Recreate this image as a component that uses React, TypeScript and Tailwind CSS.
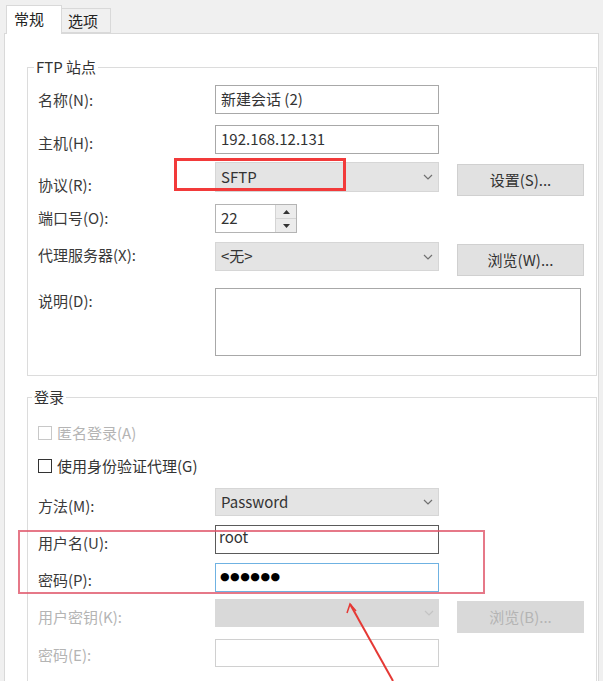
import React from "react";

function Chevron({ light }: { light?: boolean }) {
  return (
    <svg width="10" height="6" viewBox="0 0 10 6" className="shrink-0">
      <polyline
        points="1,1 5,5 9,1"
        fill="none"
        stroke={light ? "#c4c4c4" : "#707070"}
        strokeWidth="1.2"
      />
    </svg>
  );
}

function Tri({ up }: { up?: boolean }) {
  return (
    <svg width="7" height="4" viewBox="0 0 7 4">
      <polygon points={up ? "0,4 7,4 3.5,0" : "0,0 7,0 3.5,4"} fill="#333" />
    </svg>
  );
}

export default function App() {
  return (
    <div className="relative w-[603px] h-[681px] overflow-hidden bg-[#f0f0f0] font-['Noto_Sans_CJK_SC','Noto_Sans',sans-serif] text-[15px] text-[#3a3a3a]">
      {/* Tabs */}
      <div className="flex items-end h-[33px] pl-[6px]">
        <div className="relative z-10 -mb-px flex h-[29px] w-[56px] items-start bg-white border border-b-0 border-[#d9d9d9] pl-[7px] pt-[3px] leading-[20px] text-[#222]">
          常规
        </div>
        <div className="flex h-[25px] w-[49px] items-start bg-[#f0f0f0] border border-l-0 border-[#d9d9d9] pl-[6px] pt-[2px] leading-[20px] text-[#222]">
          选项
        </div>
      </div>

      {/* Panel */}
      <div className="ml-[4px] w-[595px] h-[660px] bg-white border border-[#d9d9d9] pl-[22px] pr-[1px] pt-[33px]">
        {/* FTP group */}
        <div className="relative border border-[#dcdcdc] pl-[10px] pb-[19px]">
          <span className="absolute left-[6px] -top-[11px] bg-white px-[2px] leading-[20px] text-[#333]">
            FTP 站点
          </span>

          {/* 名称 */}
          <div className="mt-[17px] flex items-start">
            <div className="w-[177px] pt-[5px] leading-[20px]">名称(N):</div>
            <div className="flex h-[29px] w-[224px] items-center border border-[#a8a8a8] pl-[5px] text-[#333]">
              新建会话 (2)
            </div>
          </div>

          {/* 主机 */}
          <div className="mt-[11px] flex items-start">
            <div className="w-[177px] pt-[8px] leading-[20px]">主机(H):</div>
            <div className="flex h-[29px] w-[224px] items-center border border-[#a8a8a8] pl-[5px] text-[#333]">
              192.168.12.131
            </div>
          </div>

          {/* 协议 */}
          <div className="mt-[8px] flex items-start">
            <div className="w-[177px] pt-[13px] leading-[20px]">协议(R):</div>
            <div className="flex h-[30px] w-[224px] items-center justify-between bg-[#e4e4e4] border border-[#d6d6d6] pl-[5px] pr-[5px] text-[#333]">
              <span>SFTP</span>
              <Chevron />
            </div>
            <div className="ml-[18px] mt-[2px] flex h-[32px] w-[127px] items-center justify-center bg-[#e1e1e1] border border-[#d0d0d0] text-[#333]">
              设置(S)...
            </div>
          </div>

          {/* 端口号 */}
          <div className="mt-[8px] flex items-start">
            <div className="w-[177px] pt-[4px] leading-[20px]">端口号(O):</div>
            <div className="flex h-[29px] w-[82px] items-stretch border border-[#b4b4b4]">
              <div className="flex flex-1 items-center pl-[5px] text-[#333]">22</div>
              <div className="flex w-[21px] flex-col border-l border-[#d4d4d4] bg-[#ececec]">
                <div className="flex flex-1 items-center justify-center border-b border-[#d4d4d4]">
                  <Tri up />
                </div>
                <div className="flex flex-1 items-center justify-center">
                  <Tri />
                </div>
              </div>
            </div>
          </div>

          {/* 代理服务器 */}
          <div className="mt-[9px] flex items-start">
            <div className="w-[177px] pt-[3px] leading-[20px]">代理服务器(X):</div>
            <div className="flex h-[29px] w-[224px] items-center justify-between bg-[#e4e4e4] border border-[#d6d6d6] pl-[5px] pr-[5px] text-[#333]">
              <span>&lt;无&gt;</span>
              <Chevron />
            </div>
            <div className="ml-[18px] mt-[2px] flex h-[32px] w-[127px] items-center justify-center bg-[#e1e1e1] border border-[#d0d0d0] text-[#333]">
              浏览(W)...
            </div>
          </div>

          {/* 说明 */}
          <div className="mt-[12px] flex items-start">
            <div className="w-[177px] pt-[3px] leading-[20px]">说明(D):</div>
            <div className="h-[68px] w-[366px] border border-[#a8a8a8]" />
          </div>
        </div>

        {/* Login group */}
        <div className="relative mt-[21px] border border-[#dcdcdc] pl-[10px] pb-[30px]">
          <span className="absolute left-[4px] -top-[11px] bg-white px-[2px] leading-[20px] text-[#333]">
            登录
          </span>

          <div className="mt-[25px] flex h-[20px] items-center gap-[5px] text-[#b4b4b4]">
            <div className="h-[14px] w-[14px] border border-[#c8c8c8]" />
            <span className="leading-[20px]">匿名登录(A)</span>
          </div>

          <div className="mt-[13px] flex h-[20px] items-center gap-[5px] text-[#333]">
            <div className="h-[14px] w-[14px] border border-[#333]" />
            <span className="leading-[20px]">使用身份验证代理(G)</span>
          </div>

          {/* 方法 */}
          <div className="mt-[12px] flex items-start">
            <div className="w-[177px] pt-[8px] leading-[20px]">方法(M):</div>
            <div className="flex h-[28px] w-[224px] items-center justify-between bg-[#e4e4e4] border border-[#d6d6d6] pl-[5px] pr-[5px] text-[#333]">
              <span>Password</span>
              <Chevron />
            </div>
          </div>

          {/* 用户名 */}
          <div className="mt-[9px] flex items-start">
            <div className="w-[177px] pt-[8px] leading-[20px]">用户名(U):</div>
            <div className="flex h-[29px] w-[224px] items-start border border-[#5a5a5a] pl-[3px] pt-[1px] leading-[20px] text-[#333]">
              root
            </div>
          </div>

          {/* 密码 */}
          <div className="mt-[9px] flex items-start">
            <div className="w-[177px] pt-[7px] leading-[20px]">密码(P):</div>
            <div className="flex h-[29px] w-[224px] items-center border border-[#6fb2e2] pl-[4px]">
              <span className="font-['DejaVu_Sans',sans-serif] text-[11px] tracking-[0.5px] text-black">●●●●●●</span>
            </div>
          </div>

          {/* 用户密钥 */}
          <div className="mt-[7px] flex items-start text-[#b4b4b4]">
            <div className="w-[177px] pt-[8px] leading-[20px]">用户密钥(K):</div>
            <div className="flex h-[28px] w-[224px] items-center justify-end bg-[#d9d9d9] pr-[5px]">
              <Chevron light />
            </div>
            <div className="ml-[18px] mt-[2px] flex h-[32px] w-[127px] items-center justify-center bg-[#d9d9d9]">
              浏览(B)...
            </div>
          </div>

          {/* 密码(E) */}
          <div className="mt-[6px] flex items-start text-[#b4b4b4]">
            <div className="w-[177px] pt-[6px] leading-[20px]">密码(E):</div>
            <div className="h-[28px] w-[224px] border border-[#d0d0d0]" />
          </div>
        </div>
      </div>

      {/* Annotations */}
      <div className="absolute left-[174px] top-[158px] h-[33px] w-[172px] border-[3px] border-[#f23a3a]" />
      <div className="absolute left-[18px] top-[530px] h-[64px] w-[467px] border-2 border-[#e0566a]/80" />
      <svg className="pointer-events-none absolute left-0 top-0" width="603" height="681">
        <line x1="350" y1="604" x2="393" y2="681" stroke="#e53935" strokeWidth="2" />
        <polyline points="347,613 350,604 356,611" fill="none" stroke="#e53935" strokeWidth="1.5" />
      </svg>
    </div>
  );
}
